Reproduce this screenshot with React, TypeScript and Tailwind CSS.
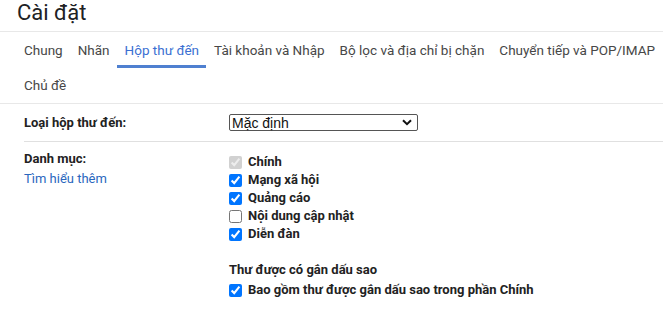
import type { ReactNode } from "react";

// Gmail-style "Cài đặt" page, Inbox tab selected.

const tabs = [
  "Chung",
  "Nhãn",
  "Hộp thư đến",
  "Tài khoản và Nhập",
  "Bộ lọc và địa chỉ bị chặn",
  "Chuyển tiếp và POP/IMAP",
];

const categories: { label: string; checked: boolean; disabled?: boolean }[] = [
  { label: "Chính", checked: true, disabled: true },
  { label: "Mạng xã hội", checked: true },
  { label: "Quảng cáo", checked: true },
  { label: "Nội dung cập nhật", checked: false },
  { label: "Diễn đàn", checked: true },
];

function Tab({ label, active }: { label: string; active?: boolean }) {
  return (
    <div
      className={
        active
          ? "h-[36px] pl-2 pr-[7px] flex items-center whitespace-nowrap text-[13.5px] text-[#3a6fd2] border-b-[3px] border-[#4f80d0] pt-[3px]"
          : "h-[36px] pl-2 pr-[7px] flex items-center whitespace-nowrap text-[13.5px] text-[#474747]"
      }
    >
      {label}
    </div>
  );
}

function Check({ checked, disabled, children }: { checked: boolean; disabled?: boolean; children: ReactNode }) {
  return (
    <label className="h-[18px] flex items-center gap-[6px]">
      <input
        type="checkbox"
        defaultChecked={checked}
        disabled={disabled}
        className="m-0 w-[13px] h-[13px]"
      />
      <span className="font-bold text-[13px] text-[#222]">{children}</span>
    </label>
  );
}

export default function App() {
  return (
    <div
      className="w-[663px] h-[315px] bg-white overflow-hidden"
      style={{ fontFamily: "Roboto, 'Liberation Sans', Arial, sans-serif" }}
    >
      <div className="h-[32px] pl-[17px] text-[22px] leading-[26px] text-[#202124] border-b border-[#e8e8e8]">
        Cài đặt
      </div>

      <div className="h-[72px] pl-4 border-b border-[#e8e8e8]">
        <div className="flex">
          {tabs.map((t) => (
            <Tab key={t} label={t} active={t === "Hộp thư đến"} />
          ))}
        </div>
        <div className="flex">
          <div className="h-[35px] pl-2 flex items-center text-[13.5px] text-[#474747]">Chủ đề</div>
        </div>
      </div>

      <div className="pl-6">
        <div className="h-[38px] flex items-center border-b border-[#e0e0e0]">
          <div className="w-[205px] font-bold text-[13px] text-[#222]">Loại hộp thư đến:</div>
          <div className="w-[189px] h-[17px] border border-[#555] rounded-[2px] flex items-center justify-between pl-[2px] pr-[5px]">
            <span className="text-[14px] leading-none text-[#111]" style={{ fontFamily: "Arial, 'Liberation Sans', sans-serif" }}>
              Mặc định
            </span>
            <svg width="10" height="7" viewBox="0 0 10 7">
              <path d="M1 1.2 L5 5.2 L9 1.2" fill="none" stroke="#111" strokeWidth="2" />
            </svg>
          </div>
        </div>

        <div className="flex">
          <div className="w-[205px] flex flex-col pt-[7px]">
            <div className="font-bold text-[13px] leading-[20px] text-[#222]">Danh mục:</div>
            <div className="text-[13px] leading-[20px] text-[#2a67be]">Tìm hiểu thêm</div>
          </div>
          <div className="flex flex-col pt-[11px]">
            {categories.map((c) => (
              <Check key={c.label} checked={c.checked} disabled={c.disabled}>
                {c.label}
              </Check>
            ))}
            <div className="mt-[18px] h-[18px] flex items-center font-bold text-[13px] text-[#222]">
              Thư được có gắn dấu sao
            </div>
            <div className="mt-[2px]">
              <Check checked>Bao gồm thư được gắn dấu sao trong phần Chính</Check>
            </div>
          </div>
        </div>
      </div>
    </div>
  );
}
